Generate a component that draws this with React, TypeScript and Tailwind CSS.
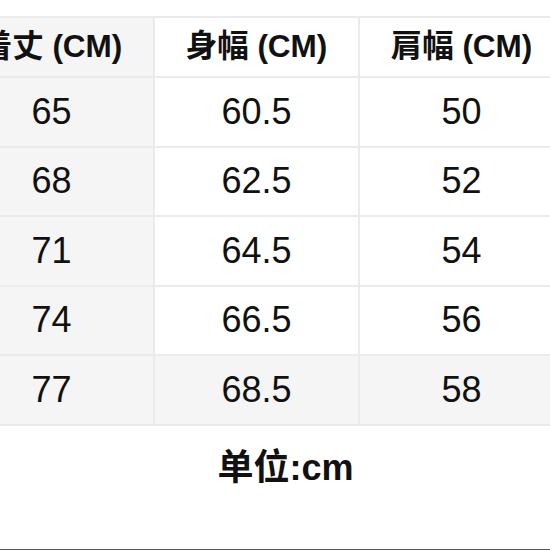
const headers = ['着丈 (CM)', '身幅 (CM)', '肩幅 (CM)'];

const rows = [
    ['65', '60.5', '50'],
    ['68', '62.5', '52'],
    ['71', '64.5', '54'],
    ['74', '66.5', '56'],
    ['77', '68.5', '58'],
];

export default function App() {
    return (
        <div className="relative w-[550px] h-[550px] overflow-hidden bg-white border-b border-[#555555] flex flex-col">
            {/* Size table, cropped on both sides like the source photo */}
            <div className="mt-[16px] -ml-[50px] w-[615px] border-t-2 border-[#ebebeb] text-[#111111] [font-family:'Liberation_Sans','Noto_Sans_CJK_JP',sans-serif]">
                <div className="flex h-[60px] border-b-2 border-[#ebebeb]">
                    {headers.map((h, i) => (
                        <div
                            key={h}
                            className={`w-[205px] shrink-0 flex items-center justify-center border-r-2 border-[#ebebeb] text-[31.5px] font-bold ${i === 0 ? 'bg-[#f5f5f5]' : 'bg-white'}`}
                        >
                            {h}
                        </div>
                    ))}
                </div>

                {rows.map((row, r) => (
                    <div key={r} className="flex h-[69.5px] border-b-2 border-[#ebebeb]">
                        {row.map((v, i) => (
                            <div
                                key={i}
                                className={`w-[205px] shrink-0 flex items-center justify-center border-r-2 border-[#ebebeb] text-[36px] ${i === 0 || r === rows.length - 1 ? 'bg-[#f5f5f5]' : 'bg-white'}`}
                            >
                                {v}
                            </div>
                        ))}
                    </div>
                ))}
            </div>

            <div className="h-[85px] flex items-center justify-center pl-[21px] text-[36px] font-bold text-[#111111] [font-family:'Liberation_Sans','Noto_Sans_CJK_SC',sans-serif]">
                单位:cm
            </div>
        </div>
    );
}
